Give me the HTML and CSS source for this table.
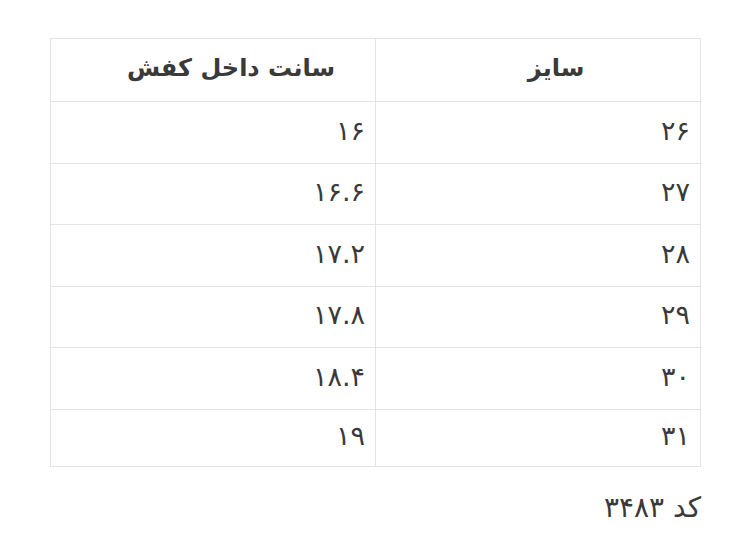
FILE: index.html
```html
<!DOCTYPE html>
<html lang="fa" dir="rtl">
<head>
<meta charset="utf-8">
<link rel="stylesheet" href="styles.css">
</head>
<body>
<div class="page">
  <table class="sizes">
    <thead>
      <tr class="head-row">
        <th>سایز</th>
        <th>سانت داخل کفش</th>
      </tr>
    </thead>
    <tbody>
      <tr class="row"><td>۲۶</td><td>۱۶</td></tr>
      <tr class="row"><td>۲۷</td><td>۱۶.۶</td></tr>
      <tr class="row"><td>۲۸</td><td>۱۷.۲</td></tr>
      <tr class="row"><td>۲۹</td><td>۱۷.۸</td></tr>
      <tr class="row"><td>۳۰</td><td>۱۸.۴</td></tr>
      <tr class="row last"><td>۳۱</td><td>۱۹</td></tr>
    </tbody>
  </table>
  <p class="code">کد ۳۴۸۳</p>
</div>
</body>
</html>
```

FILE: styles.css
```css
html, body {
  margin: 0;
  padding: 0;
  background: #ffffff;
}
body {
  font-family: "DejaVu Sans", sans-serif;
  color: #3a3a3a;
}
.page {
  padding: 38px 49px 0 50px;
}
.sizes {
  width: 651px;
  border-collapse: collapse;
  table-layout: fixed;
}
.sizes th,
.sizes td {
  border: 1px solid #e3e3e3;
  width: 50%;
  padding: 0;
  line-height: 1;
}
.sizes th {
  height: 58px;
  font-size: 24px;
  font-weight: 600;
  text-align: center;
  padding: 0 0 4px 36px;
}
.sizes td {
  height: 56.5px;
  font-size: 27px;
  font-weight: 400;
  text-align: right;
  padding: 0 10px 4px 10px;
}
.sizes .last td {
  height: 52px;
}
.code {
  margin: 24px 0 0 0;
  font-size: 28px;
  line-height: 1.2;
  text-align: right;
  color: #3a3a3a;
}
```
